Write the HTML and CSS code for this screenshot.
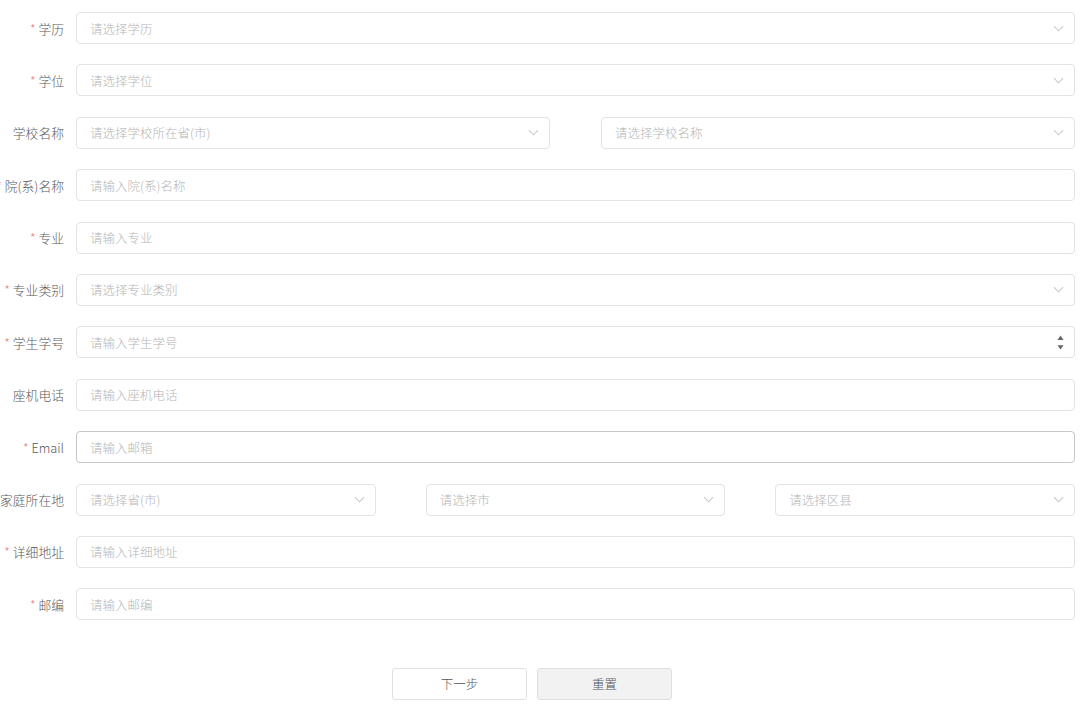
FILE: index.html
```html
<!DOCTYPE html>
<html lang="zh">
<head>
<meta charset="utf-8">
<link rel="stylesheet" href="styles.css">
</head>
<body>
<form class="form">
  <div class="row">
    <label class="label"><span class="req">*</span>&nbsp;学历</label>
    <div class="fields"><div class="box select"><span class="ph">请选择学历</span><svg class="chev" viewBox="0 0 12 7"><path d="M1 1l5 5 5-5"/></svg></div></div>
  </div>
  <div class="row">
    <label class="label"><span class="req">*</span>&nbsp;学位</label>
    <div class="fields"><div class="box select"><span class="ph">请选择学位</span><svg class="chev" viewBox="0 0 12 7"><path d="M1 1l5 5 5-5"/></svg></div></div>
  </div>
  <div class="row">
    <label class="label">学校名称</label>
    <div class="fields two">
      <div class="box select"><span class="ph">请选择学校所在省(市)</span><svg class="chev" viewBox="0 0 12 7"><path d="M1 1l5 5 5-5"/></svg></div>
      <div class="box select"><span class="ph">请选择学校名称</span><svg class="chev" viewBox="0 0 12 7"><path d="M1 1l5 5 5-5"/></svg></div>
    </div>
  </div>
  <div class="row">
    <label class="label"><span class="req">*</span>&nbsp;院(系)名称</label>
    <div class="fields"><div class="box"><span class="ph">请输入院(系)名称</span></div></div>
  </div>
  <div class="row">
    <label class="label"><span class="req">*</span>&nbsp;专业</label>
    <div class="fields"><div class="box"><span class="ph">请输入专业</span></div></div>
  </div>
  <div class="row">
    <label class="label"><span class="req">*</span>&nbsp;专业类别</label>
    <div class="fields"><div class="box select"><span class="ph">请选择专业类别</span><svg class="chev" viewBox="0 0 12 7"><path d="M1 1l5 5 5-5"/></svg></div></div>
  </div>
  <div class="row">
    <label class="label"><span class="req">*</span>&nbsp;学生学号</label>
    <div class="fields"><div class="box select"><span class="ph">请输入学生学号</span><svg class="spin" viewBox="0 0 8 18"><path d="M4 1l3.5 5h-7z"/><path d="M4 17l3.5-5h-7z"/></svg></div></div>
  </div>
  <div class="row">
    <label class="label">座机电话</label>
    <div class="fields"><div class="box"><span class="ph">请输入座机电话</span></div></div>
  </div>
  <div class="row">
    <label class="label"><span class="req">*</span>&nbsp;Email</label>
    <div class="fields"><div class="box focus"><span class="ph">请输入邮箱</span></div></div>
  </div>
  <div class="row">
    <label class="label">家庭所在地</label>
    <div class="fields three">
      <div class="box select"><span class="ph">请选择省(市)</span><svg class="chev" viewBox="0 0 12 7"><path d="M1 1l5 5 5-5"/></svg></div>
      <div class="box select"><span class="ph">请选择市</span><svg class="chev" viewBox="0 0 12 7"><path d="M1 1l5 5 5-5"/></svg></div>
      <div class="box select"><span class="ph">请选择区县</span><svg class="chev" viewBox="0 0 12 7"><path d="M1 1l5 5 5-5"/></svg></div>
    </div>
  </div>
  <div class="row">
    <label class="label"><span class="req">*</span>&nbsp;详细地址</label>
    <div class="fields"><div class="box"><span class="ph">请输入详细地址</span></div></div>
  </div>
  <div class="row">
    <label class="label"><span class="req">*</span>&nbsp;邮编</label>
    <div class="fields"><div class="box"><span class="ph">请输入邮编</span></div></div>
  </div>
  <div class="actions">
    <button type="button" class="btn">下一步</button>
    <button type="button" class="btn gray">重置</button>
  </div>
</form>
</body>
</html>
```

FILE: styles.css
```css
* { box-sizing: border-box; }
html, body { margin: 0; padding: 0; background: #fff; }
body {
  font-family: "Noto Sans CJK SC", "Liberation Sans", sans-serif;
  font-size: 12px;
  color: #555;
  overflow: hidden;
}
.form {
  display: flex;
  flex-direction: column;
  gap: 20.4px;
  padding-top: 12px;
  width: 1080px;
}
.row {
  display: flex;
  align-items: center;
  height: 32px;
}
.label {
  width: 64px;
  flex: none;
  display: flex;
  justify-content: flex-end;
  white-space: nowrap;
  color: #5a5a5a;
  font-size: 12.8px;
  font-weight: 300;
  margin-right: 12px;
}
.label .req { color: #f08080; }
.fields {
  width: 999px;
  display: flex;
  gap: 51px;
}
.fields.three { gap: 50px; }
.fields > .box { flex: 1; }
.box {
  height: 32px;
  border: 1px solid #e3e3e3;
  border-radius: 4px;
  display: flex;
  align-items: center;
  padding: 0 14px 0 13px;
  background: #fff;
}
.box.focus { border-color: #c6c6c6; }
.ph { color: #b5b5b5; flex: 1; font-size: 12.5px; font-weight: 300; }
.chev {
  width: 11px;
  height: 7px;
  fill: none;
  stroke: #c8c8c8;
  stroke-width: 1.2;
  margin-right: -4px;
}
.spin {
  width: 7px;
  height: 17px;
  fill: #666;
  margin-right: -4px;
}
.actions {
  display: flex;
  gap: 10px;
  padding-left: 392px;
  margin-top: 27px;
}
.btn {
  width: 135px;
  height: 32px;
  border: 1px solid #e0e0e0;
  border-radius: 3px;
  background: #fff;
  color: #555;
  font-family: "Noto Sans CJK SC", "Liberation Sans", sans-serif;
  font-size: 12.5px;
  font-weight: 300;
}
.btn.gray { background: #f2f2f2; }
```
